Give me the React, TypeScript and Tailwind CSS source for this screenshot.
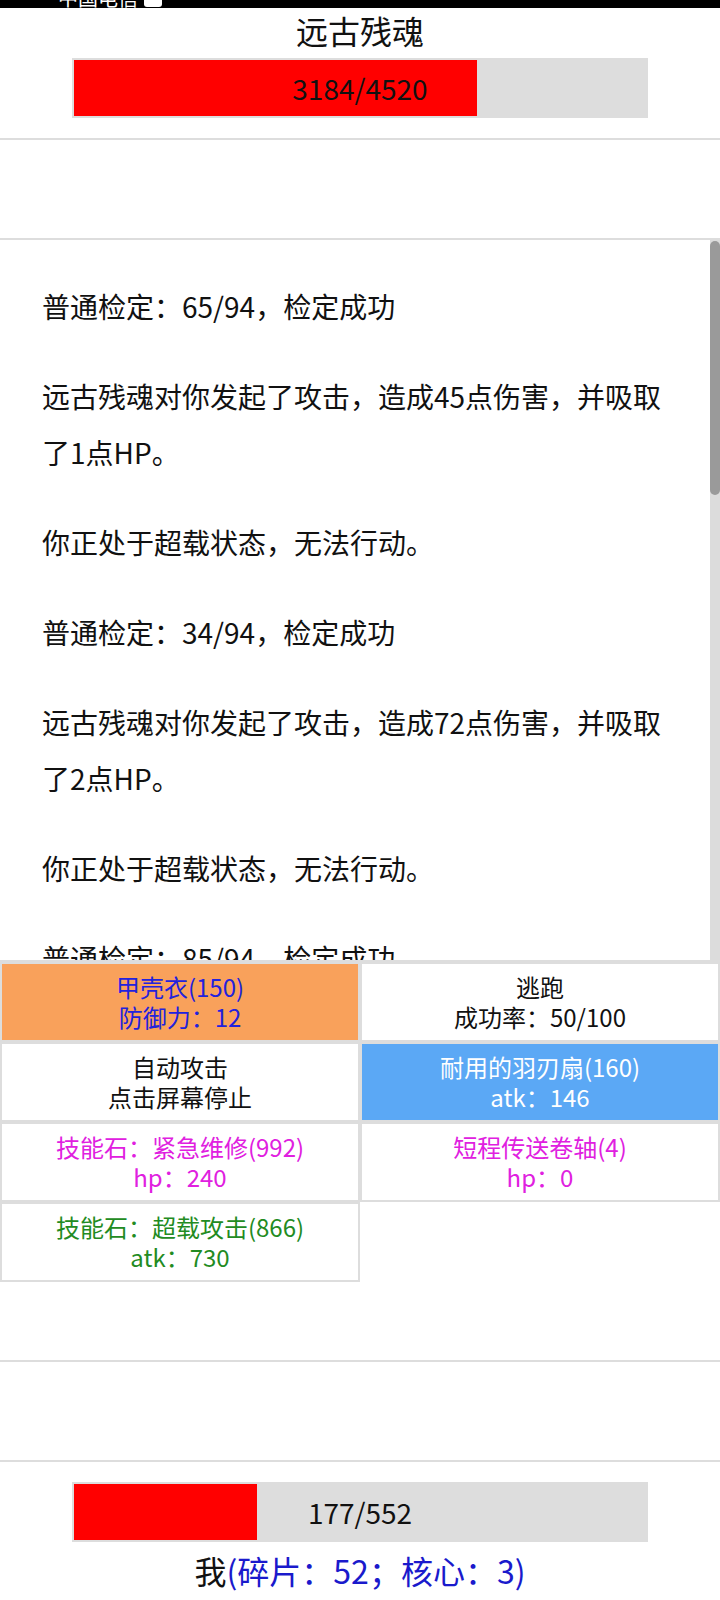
import React from 'react';

const logs = [
  '普通检定：65/94，检定成功',
  '远古残魂对你发起了攻击，造成45点伤害，并吸取了1点HP。',
  '你正处于超载状态，无法行动。',
  '普通检定：34/94，检定成功',
  '远古残魂对你发起了攻击，造成72点伤害，并吸取了2点HP。',
  '你正处于超载状态，无法行动。',
  '普通检定：85/94，检定成功',
];

const actions = [
  { title: '甲壳衣(150)', sub: '防御力：12', cls: 'bg-[#f9a15b] text-[#2222dd]' },
  { title: '逃跑', sub: '成功率：50/100', cls: 'bg-white text-[#111]' },
  { title: '自动攻击', sub: '点击屏幕停止', cls: 'bg-white text-[#111]' },
  { title: '耐用的羽刃扇(160)', sub: 'atk：146', cls: 'bg-[#5ba8f5] text-white' },
  { title: '技能石：紧急维修(992)', sub: 'hp：240', cls: 'bg-white text-[#e020e0]' },
  { title: '短程传送卷轴(4)', sub: 'hp：0', cls: 'bg-white text-[#e020e0]' },
  { title: '技能石：超载攻击(866)', sub: 'atk：730', cls: 'bg-white text-[#228b22]' },
];

function HpBar({ hp, max }: { hp: number; max: number }) {
  return (
    <div className="relative mx-auto h-[60px] w-[576px] bg-[#dddddd] p-[2px]">
      <div className="h-full bg-[#ff0000]" style={{ width: `${(hp / max) * 100}%` }} />
      <div className="absolute inset-0 flex items-center justify-center text-[28px] text-[#111]">
        {hp}/{max}
      </div>
    </div>
  );
}

export default function App() {
  return (
    <div className="min-h-[1600px] bg-white font-['Noto_Sans_CJK_SC','Noto_Sans',sans-serif] text-[#111]">
      {/* status bar, mostly cut off */}
      <div className="flex h-[8px] items-end gap-[6px] overflow-hidden bg-black pl-[58px]">
        <span className="text-[20px] leading-[20px] text-white">中国电信</span>
        <span className="mb-[1px] h-[14px] w-[18px] rounded-[3px] bg-white" />
      </div>

      <div className="text-center text-[32px] leading-[44px]">远古残魂</div>
      <div className="mt-[6px]">
        <HpBar hp={3184} max={4520} />
      </div>

      <div className="mt-[20px] h-[102px] border-y-2 border-[#dddddd]" />

      <div className="flex h-[722px] border-b-2 border-[#dddddd]">
        <div className="flex-1 overflow-hidden px-[42px] pt-[38px] text-[28px] leading-[56px]">
          {logs.map((line, i) => (
            <p key={i} className="mb-[34px]">
              {line}
            </p>
          ))}
        </div>
        <div className="w-[10px] bg-[#dcdcdc] pt-[1px]">
          <div className="h-[254px] rounded-full bg-[#9a9a9a]" />
        </div>
      </div>

      <div className="grid grid-cols-2">
        {actions.map((a) => (
          <div
            key={a.title}
            className={`flex h-[80px] flex-col items-center justify-center border-2 border-[#dddddd] text-[24px] leading-[30px] ${a.cls}`}
          >
            <span>{a.title}</span>
            <span>{a.sub}</span>
          </div>
        ))}
      </div>

      <div className="h-[78px]" />
      <div className="h-[100px] border-t-2 border-[#dddddd]" />
      <div className="border-t-2 border-[#dddddd] pt-[20px]">
        <HpBar hp={177} max={552} />
        <div className="mt-[6px] text-center text-[32px] leading-[44px]">
          我<span className="text-[#1a1acc]">(碎片：52；核心：3)</span>
        </div>
      </div>
    </div>
  );
}
